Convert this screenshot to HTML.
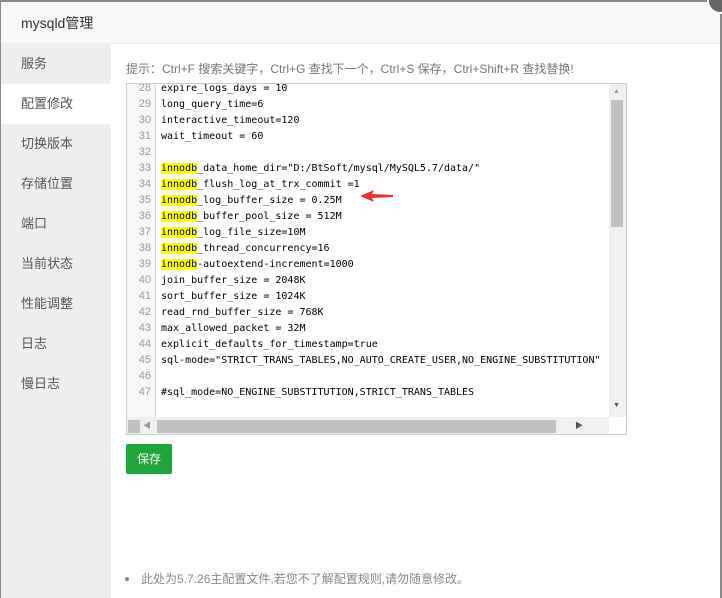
<!DOCTYPE html>
<html><head><meta charset="utf-8"><style>
*{margin:0;padding:0;box-sizing:border-box}
body{width:722px;height:598px;overflow:hidden;background:#fff;font-family:"Liberation Sans","Noto Sans CJK SC",sans-serif;position:relative}
.top{position:absolute;left:0;top:0;width:722px;height:2px;background:#8a8a8a}
.lb{position:absolute;left:0;top:0;width:1px;height:598px;background:#8a8a8a}
.rb{position:absolute;left:720px;top:0;width:2px;height:598px;background:#8a8a8a}
.hdr{position:absolute;left:1px;top:2px;width:719px;height:42px;background:#f8f8f8;border-bottom:1px solid #eee;font-size:14px;color:#333;padding-left:20px;line-height:42px}
.close{position:absolute;left:707px;top:-12px;width:26px;height:26px;border-radius:50%;background:#666;border:2px solid #fff}
.side{position:absolute;left:1px;top:44px;width:110px;height:554px;background:#efefef}
.side div{height:40px;line-height:40px;padding-left:20px;font-size:13px;color:#555}
.side div.on{background:#fff}
.tip{position:absolute;left:126px;top:60px;font-size:12px;color:#777}
.ed{position:absolute;left:126px;top:83px;width:501px;height:352px;border:1px solid #ccc;overflow:hidden;background:#fff}
.gut{position:absolute;left:0;top:0;width:29px;height:334px;background:#f7f7f7;border-right:1px solid #ddd}
.ln{position:absolute;left:0;width:24px;text-align:right;font-size:11px;font-family:"Liberation Sans",sans-serif;color:#999}
.cd{position:absolute;left:34px;font-size:10px;font-family:"DejaVu Sans Mono","Liberation Mono",monospace;color:#000;white-space:pre;line-height:14px}
.hl{background:#ff0}
.vs{position:absolute;left:482px;top:0;width:17px;height:333px;background:#f0f0f0}
.vs .th{position:absolute;left:2px;top:16px;width:12px;height:127px;background:#c1c1c1}
.hs{position:absolute;left:0;top:333px;width:482px;height:17px;background:#f0f0f0}
.hs .th{position:absolute;left:30px;top:3px;width:399px;height:13px;background:#c1c1c1}
.hs .t2{position:absolute;left:1px;top:3px;width:12px;height:13px;background:#c1c1c1}
.btn{position:absolute;left:126px;top:444px;width:46px;height:30px;background:#20a53a;border-radius:2px;color:#fff;font-size:12px;text-align:center;line-height:30px}
.note{position:absolute;left:124px;padding-left:17px;top:570px;font-size:12px;color:#888}
.note:before{content:"";position:absolute;left:1px;top:7px;width:4px;height:4px;border-radius:50%;background:#888}
</style></head><body>
<div class="top"></div><div class="lb"></div><div class="rb"></div>
<div class="hdr">mysqld管理</div>
<div class="close"></div>
<div class="side">
<div>服务</div><div class="on">配置修改</div><div>切换版本</div><div>存储位置</div><div>端口</div><div>当前状态</div><div>性能调整</div><div>日志</div><div>慢日志</div>
</div>
<div class="tip">提示：Ctrl+F 搜索关键字，Ctrl+G 查找下一个，Ctrl+S 保存，Ctrl+Shift+R 查找替换!</div>
<div class="ed">
<div class="gut"></div>
<div id="c"></div>
<svg style="position:absolute;left:233px;top:105px" width="33" height="14"><polygon points="0,7 14,1 12,5 33,6 33,8 12,9 14,13" fill="#e8322b"/></svg>
<div class="vs"><div class="th"></div><span style="position:absolute;left:4px;top:4px;font-size:7px;color:#999">▲</span><span style="position:absolute;left:4px;top:318px;font-size:7px;color:#555">▼</span></div>
<div class="hs"><div class="t2"></div><div class="th"></div><span style="position:absolute;left:16px;top:3px;font-size:8px;color:#999">◀</span><span style="position:absolute;left:448px;top:3px;font-size:8px;color:#555">▶</span></div>
</div>
<div class="btn">保存</div>
<div class="note">此处为5.7.26主配置文件,若您不了解配置规则,请勿随意修改。</div>
<script>
var L=["expire_logs_days = 10","long_query_time=6","interactive_timeout=120","wait_timeout = 60","",
"@_data_home_dir=\"D:/BtSoft/mysql/MySQL5.7/data/\"","@_flush_log_at_trx_commit =1","@_log_buffer_size = 0.25M","@_buffer_pool_size = 512M","@_log_file_size=10M","@_thread_concurrency=16","@-autoextend-increment=1000",
"join_buffer_size = 2048K","sort_buffer_size = 1024K","read_rnd_buffer_size = 768K","max_allowed_packet = 32M","explicit_defaults_for_timestamp=true","sql-mode=\"STRICT_TRANS_TABLES,NO_AUTO_CREATE_USER,NO_ENGINE_SUBSTITUTION\"","","#sql_mode=NO_ENGINE_SUBSTITUTION,STRICT_TRANS_TABLES"];
var h="";for(var i=0;i<L.length;i++){var y=-3+i*16;h+='<div class="ln" style="top:'+(y+1)+'px">'+(28+i)+'</div>';
var s=L[i].replace(/&/g,"&amp;").replace(/</g,"&lt;").replace("@",'<span class="hl">innodb</span>');
h+='<div class="cd" style="top:'+(y+1)+'px">'+s+'</div>';}
document.getElementById("c").innerHTML=h;
</script>
</body></html>
